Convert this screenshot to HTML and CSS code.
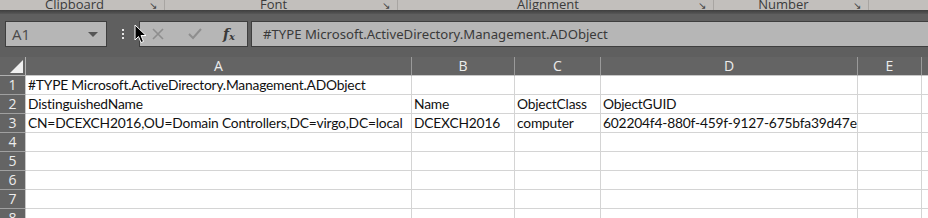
FILE: index.html
```html
<!DOCTYPE html>
<html>
<head>
<meta charset="utf-8">
<link rel="stylesheet" href="styles.css">
</head>
<body>
<div class="app">
  <div class="ribbon">
    <div class="group g1"><span class="glabel">Clipboard</span><span class="launch">&#8600;</span></div>
    <div class="group g2"><span class="glabel">Font</span><span class="launch">&#8600;</span></div>
    <div class="group g3"><span class="glabel">Alignment</span><span class="launch">&#8600;</span></div>
    <div class="group g4"><span class="glabel">Number</span><span class="launch">&#8600;</span></div>
    <div class="group g5"></div>
  </div>
  <div class="shade"></div>
  <div class="fbar">
    <div class="namebox"><span>A1</span><span class="caret"></span></div>
    <div class="dots"><i></i><i></i><i></i></div>
    <div class="fbtns">
      <svg class="ico" width="14" height="14" viewBox="0 0 14 14"><path d="M2 2 L12 12 M12 2 L2 12" stroke="#8e8e8e" stroke-width="1.6" fill="none"/></svg>
      <svg class="ico" width="16" height="14" viewBox="0 0 16 14"><path d="M2 7 L6 11 L14 2" stroke="#8e8e8e" stroke-width="2" fill="none"/></svg>
      <span class="fx">f<sub>x</sub></span>
    </div>
    <div class="formula">#TYPE Microsoft.ActiveDirectory.Management.ADObject</div>
    <svg class="cursor" width="14" height="20" viewBox="0 0 14 20"><path d="M1 1 L1 16 L4.5 12.5 L7 18.5 L9.5 17.5 L7 11.5 L12 11.5 Z" fill="#000" stroke="#fff" stroke-width="1"/></svg>
  </div>
  <div class="sheet">
    <div class="corner"><span class="tri"></span></div>
    <div class="ch">A</div><div class="ch">B</div><div class="ch">C</div><div class="ch">D</div><div class="ch">E</div><div class="ch last"></div>

    <div class="rh">1</div><div class="c">#TYPE Microsoft.ActiveDirectory.Management.ADObject</div><div class="c"></div><div class="c"></div><div class="c"></div><div class="c"></div><div class="c last"></div>
    <div class="rh">2</div><div class="c">DistinguishedName</div><div class="c">Name</div><div class="c">ObjectClass</div><div class="c">ObjectGUID</div><div class="c"></div><div class="c last"></div>
    <div class="rh">3</div><div class="c">CN=DCEXCH2016,OU=Domain Controllers,DC=virgo,DC=local</div><div class="c">DCEXCH2016</div><div class="c">computer</div><div class="c">602204f4-880f-459f-9127-675bfa39d47e</div><div class="c"></div><div class="c last"></div>
    <div class="rh">4</div><div class="c"></div><div class="c"></div><div class="c"></div><div class="c"></div><div class="c"></div><div class="c last"></div>
    <div class="rh">5</div><div class="c"></div><div class="c"></div><div class="c"></div><div class="c"></div><div class="c"></div><div class="c last"></div>
    <div class="rh">6</div><div class="c"></div><div class="c"></div><div class="c"></div><div class="c"></div><div class="c"></div><div class="c last"></div>
    <div class="rh">7</div><div class="c"></div><div class="c"></div><div class="c"></div><div class="c"></div><div class="c"></div><div class="c last"></div>
    <div class="rh">8</div><div class="c"></div><div class="c"></div><div class="c"></div><div class="c"></div><div class="c"></div><div class="c last"></div>
  </div>
</div>
</body>
</html>
```
FILE: styles.css
```css
* { box-sizing: border-box; }
html, body { margin: 0; padding: 0; }
body { width: 928px; height: 218px; overflow: hidden; background: #5f5f5f; font-family: "Open Sans", "Noto Sans", sans-serif; }
.app { width: 928px; height: 218px; overflow: hidden; }

.ribbon { height: 10px; background: #c2bfbc; display: flex; overflow: hidden; }
.group { position: relative; display: flex; align-items: flex-end; height: 10px; border-right: 1px solid #a8a5a2; }
.g1 { width: 165px; }
.g2 { width: 233px; }
.g3 { width: 316px; }
.g4 { width: 155px; }
.g5 { flex: 1; border-right: none; }
.glabel { flex: 1; text-align: center; font-size: 13px; line-height: 13px; color: #3b3b3b; margin-bottom: -1px; }
.launch { width: 12px; font-size: 10px; line-height: 10px; color: #444; margin-right: 3px; margin-bottom: 0; }

.shade { height: 4px; background: linear-gradient(#3e3e3e, #575757); }

.fbar { position: relative; height: 43px; background: #5f5f5f; display: flex; align-items: flex-start; padding: 7px 0 0 5px; }
.namebox { width: 102px; height: 26px; background: #b6b6b6; border: 1px solid #3e3e3e; display: flex; align-items: center; justify-content: space-between; padding: 0 8px 0 6px; font-size: 15px; color: #4a4a4a; }
.caret { width: 0; height: 0; border-left: 5px solid transparent; border-right: 5px solid transparent; border-top: 5px solid #555; }
.dots { width: 32px; height: 26px; display: flex; flex-direction: column; align-items: center; justify-content: center; gap: 2px; }
.dots i { display: block; width: 2px; height: 2px; background: #e6e6e6; }
.fbtns { width: 109px; height: 26px; background: #b6b6b6; border: 1px solid #3e3e3e; display: flex; align-items: center; padding-left: 11px; }
.fbtns .ico:first-child { margin-right: 22px; }
.fbtns .ico + .ico { margin-right: 20px; }
.fx { font-family: "DejaVu Serif", serif; font-style: italic; font-weight: bold; font-size: 14px; color: #3a3a3a; }
.fx sub { font-size: 10px; vertical-align: -1px; }
.formula { flex: 1; height: 26px; margin-left: 3px; background: #b6b6b6; border: 1px solid #3e3e3e; border-right: none; font-family: "Noto Sans", sans-serif; font-size: 13.15px; line-height: 24px; padding-left: 11px; color: #3a3a3a; white-space: nowrap; }
.cursor { position: absolute; left: 134px; top: 10px; }

.sheet { display: grid; grid-template-columns: 26px 386px 103px 86px 257px 64px 1fr; grid-template-rows: 19px repeat(8, 19px); }
.corner { background: #646464; border-right: 1px solid #b0b0b0; border-bottom: 1px solid #b0b0b0; position: relative; }
.tri { position: absolute; right: 2px; bottom: 2px; width: 0; height: 0; border-left: 13px solid transparent; border-bottom: 13px solid #f0f0f0; }
.ch { background: #646464; color: #ececec; font-family: "Open Sans", sans-serif; font-size: 14px; line-height: 18px; text-align: center; border-right: 1px solid #9a9a9a; border-bottom: 1px solid #c8c8c8; }
.ch.last, .c.last { border-right: none; }
.rh { background: #646464; color: #ececec; font-size: 14px; line-height: 18px; text-align: center; border-right: 1px solid #c8c8c8; border-bottom: 1px solid #a0a0a0; }
.c { background: #fff; border-right: 1px solid #d4d4d4; border-bottom: 1px solid #d4d4d4; font-family: "Lato", "Open Sans", sans-serif; font-size: 13.8px; letter-spacing: -0.2px; line-height: 18px; padding-left: 2px; color: #111; white-space: nowrap; overflow: hidden; }
.c:first-of-type { overflow: visible; }
```
